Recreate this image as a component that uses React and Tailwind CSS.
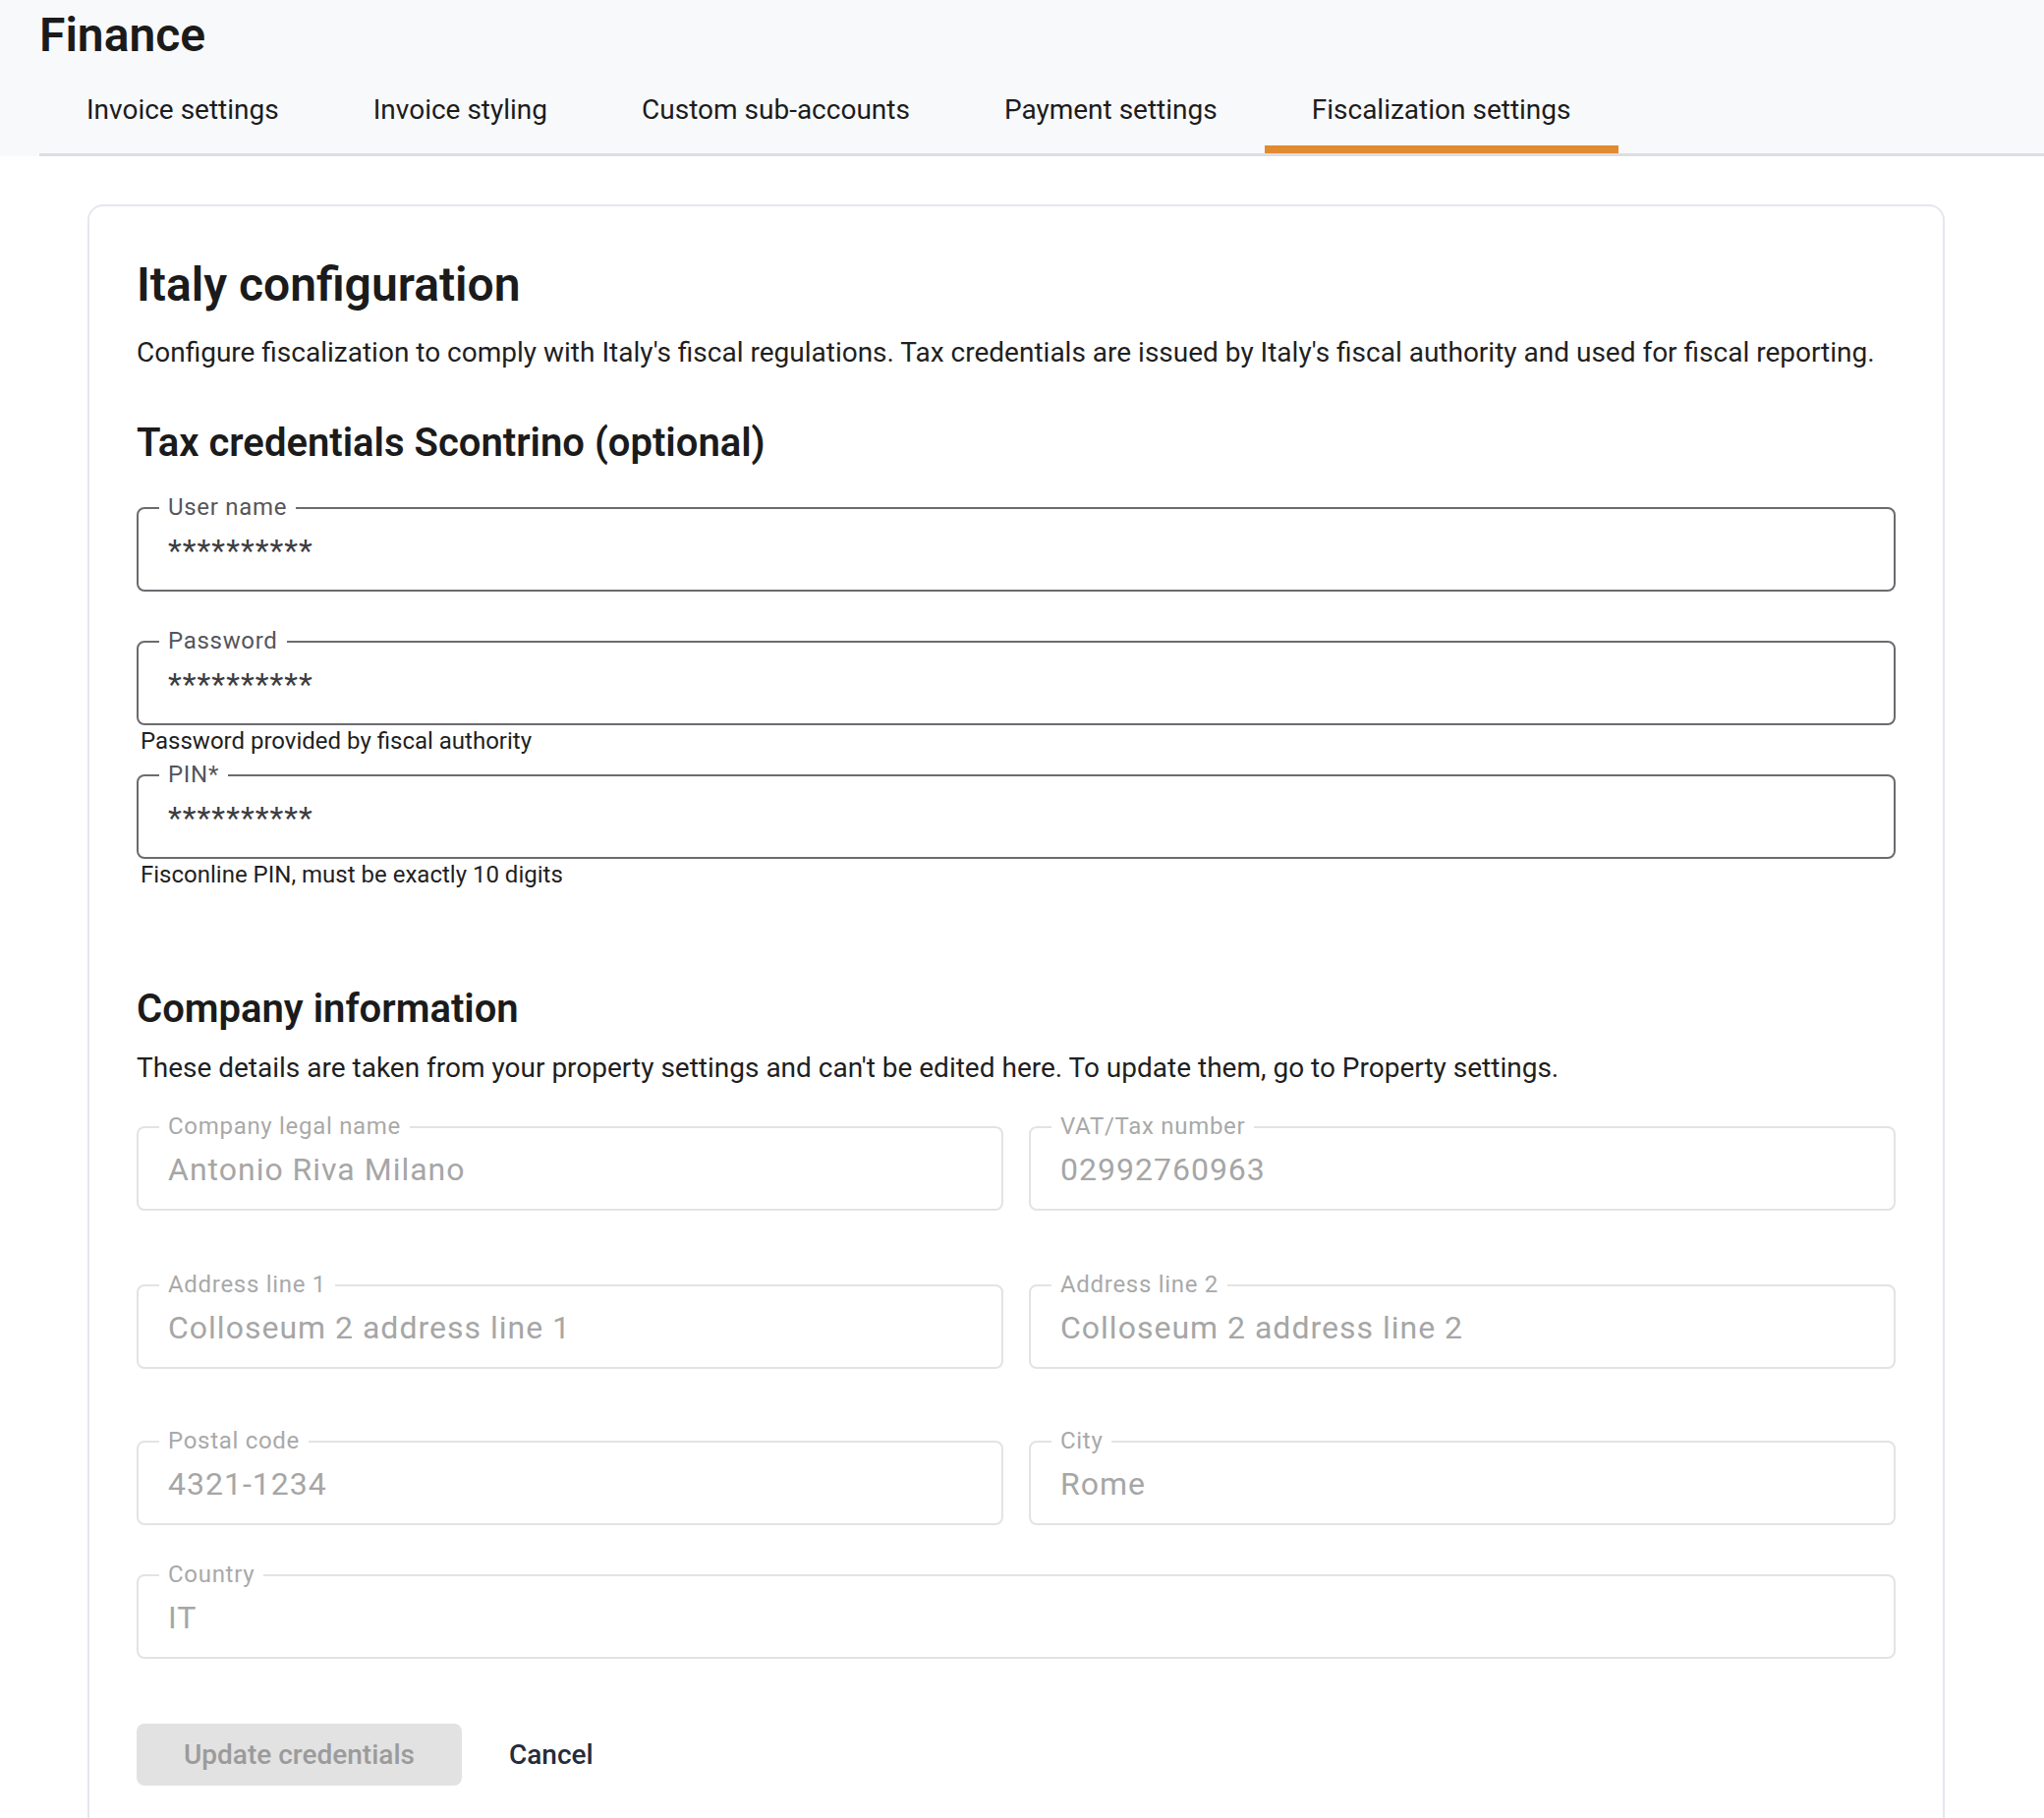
import React from "react";

const tabs = [
  "Invoice settings",
  "Invoice styling",
  "Custom sub-accounts",
  "Payment settings",
  "Fiscalization settings",
];

function OutlinedField({ label, value, helper, disabled, className = "" }) {
  return (
    <div className={className}>
      <div
        className={`relative h-[86px] rounded-lg border-2 ${
          disabled ? "border-[#e3e3e3]" : "border-[#6b6b70]"
        }`}
      >
        <span
          className={`absolute -top-[14px] left-[21px] bg-white px-[9px] text-[24px] leading-[24px] tracking-[0.7px] ${
            disabled ? "text-[#a9a9a9]" : "text-[#55555b]"
          }`}
        >
          {label}
        </span>
        <div
          className={`pl-[30px] pt-[22px] text-[32px] leading-[40px] tracking-[1px] ${
            disabled ? "text-[#a6a6a6]" : "text-[#3d3d42]"
          }`}
        >
          {value}
        </div>
      </div>
      {helper !== undefined && (
        <div className="h-[33px] pl-1 text-[24px] leading-[32px] text-[#1f1f1f]">
          {helper}
        </div>
      )}
    </div>
  );
}

export default function App() {
  return (
    <div className="min-h-screen bg-white font-['Roboto',_'Liberation_Sans',_sans-serif] text-[#1c1c1c]">
      {/* page header with tabs */}
      <div className="bg-[#f8f9fb]">
        <h1 className="pl-10 pt-2 text-[48px] leading-[56px] font-semibold text-[#1b1b1b]">
          Finance
        </h1>
        <div className="ml-10 flex border-b-[3px] border-[#dcdde5]">
          {tabs.map((t, i) => (
            <div key={t} className="relative h-[92px] px-12 pt-[32px]">
              <span className="text-[28px] leading-[32px] text-[#1c1c1c]">{t}</span>
              {i === tabs.length - 1 && (
                <span className="absolute inset-x-0 bottom-0 h-2 bg-[#e28a31]" />
              )}
            </div>
          ))}
        </div>
      </div>

      <div className="ml-[89px] mt-[49px] w-[1890px] rounded-2xl border-2 border-[#e4e7ed] px-12 pt-[52px] pb-16">
        <h2 className="text-[48px] leading-[56px] font-semibold text-[#1b1b1b]">
          Italy configuration
        </h2>
        <p className="mt-[25px] text-[28px] leading-[32px] text-[#1f1f1f]">
          Configure fiscalization to comply with Italy's fiscal regulations. Tax credentials are
          issued by Italy's fiscal authority and used for fiscal reporting.
        </p>

        <h3 className="mt-[52px] text-[40px] leading-[48px] font-semibold text-[#1b1b1b]">
          Tax credentials Scontrino (optional)
        </h3>
        <div className="mt-[41px] flex flex-col gap-[17px]">
          <OutlinedField label="User name" value="**********" helper="" />
          <OutlinedField
            label="Password"
            value="**********"
            helper="Password provided by fiscal authority"
          />
          <OutlinedField
            label="PIN*"
            value="**********"
            helper="Fisconline PIN, must be exactly 10 digits"
          />
        </div>

        <h3 className="mt-[96px] text-[40px] leading-[48px] font-semibold text-[#1b1b1b]">
          Company information
        </h3>
        <p className="mt-[20px] text-[28px] leading-[32px] text-[#1f1f1f]">
          These details are taken from your property settings and can't be edited here. To update
          them, go to Property settings.
        </p>

        <div className="mt-[43px] grid grid-cols-2 gap-x-[26px]">
          <OutlinedField disabled label="Company legal name" value="Antonio Riva Milano" />
          <OutlinedField disabled label="VAT/Tax number" value="02992760963" />
          <OutlinedField
            disabled
            className="mt-[75px]"
            label="Address line 1"
            value="Colloseum 2 address line 1"
          />
          <OutlinedField
            disabled
            className="mt-[75px]"
            label="Address line 2"
            value="Colloseum 2 address line 2"
          />
          <OutlinedField disabled className="mt-[73px]" label="Postal code" value="4321-1234" />
          <OutlinedField disabled className="mt-[73px]" label="City" value="Rome" />
        </div>
        <OutlinedField disabled className="mt-[50px]" label="Country" value="IT" />

        <div className="mt-[66px] flex items-center">
          <button
            disabled
            className="h-[63px] rounded-lg bg-[#e2e2e2] px-12 text-[28px] font-medium text-[#9b9b9b]"
          >
            Update credentials
          </button>
          <button className="h-[63px] px-12 text-[28px] font-medium text-[#252c3c]">
            Cancel
          </button>
        </div>
      </div>
    </div>
  );
}
